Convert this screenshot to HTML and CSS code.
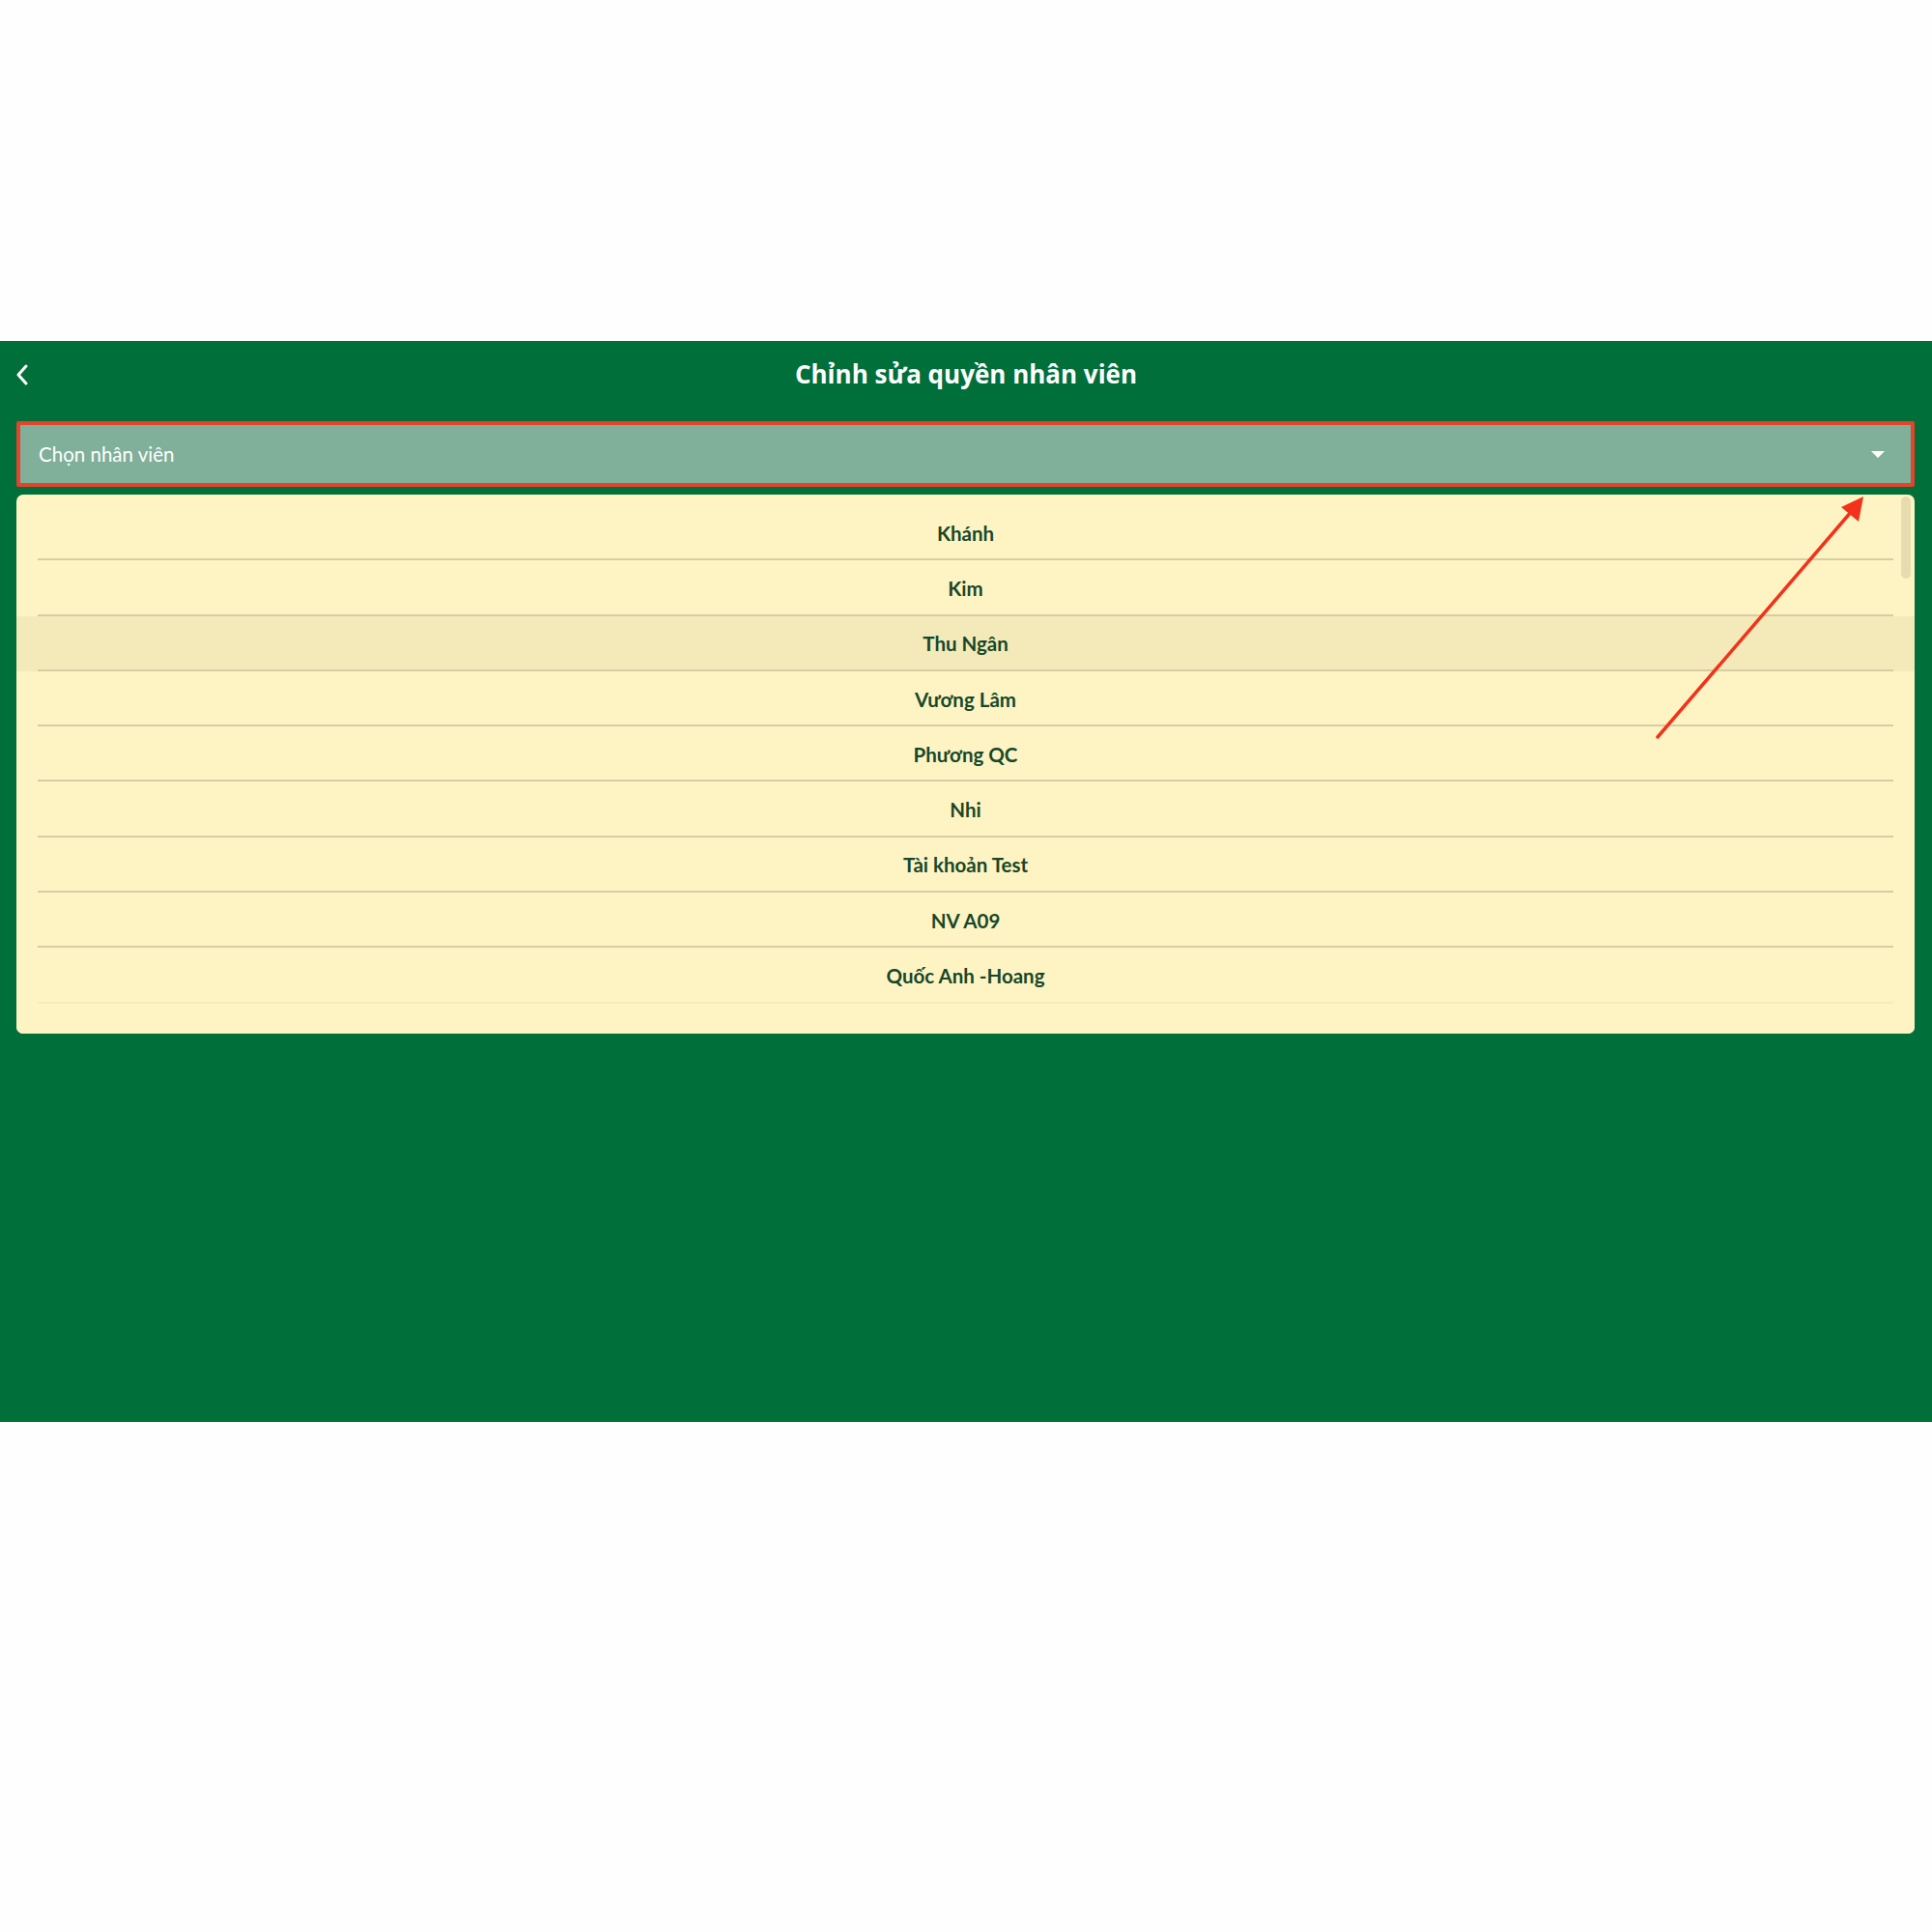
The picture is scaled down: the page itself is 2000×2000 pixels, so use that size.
FILE: index.html
```html
<!DOCTYPE html>
<html lang="vi">
<head>
    <meta charset="UTF-8">
    <meta name="viewport" content="width=device-width, initial-scale=1.0">
    <title>Chỉnh sửa quyền nhân viên</title>
    <link rel="stylesheet" href="styles.css">
</head>
<body>
    <div class="screen">
        <div class="top-bar">
            <span class="back-button">
                <svg width="14" height="22" viewBox="0 0 14 22"><path d="M11 2 L3 11 L11 20" fill="none" stroke="#fff" stroke-width="3" stroke-linecap="round" stroke-linejoin="round"/></svg>
            </span>
            <h1>Chỉnh sửa quyền nhân viên</h1>
        </div>

        <div class="content">
            <div class="select-box">
                <span>Chọn nhân viên</span>
                <span class="caret"></span>
            </div>

            <div class="dropdown">
                <ul class="options">
                    <li>Khánh</li>
                    <li>Kim</li>
                    <li class="active">Thu Ngân</li>
                    <li>Vương Lâm</li>
                    <li>Phương QC</li>
                    <li>Nhi</li>
                    <li>Tài khoản Test</li>
                    <li>NV A09</li>
                    <li>Quốc Anh -Hoang</li>
                    <li>Hoàng</li>
                </ul>
                <div class="fade"></div>
                <div class="scroll-thumb"></div>
            </div>

            <svg class="annotation" width="240" height="270" viewBox="0 0 240 270">
                <line x1="4" y1="253" x2="205" y2="19" stroke="#f2321b" stroke-width="3.5" stroke-linecap="round"/>
                <polygon points="217,4 212,30 194,15" fill="#f2321b"/>
            </svg>
        </div>
    </div>
</body>
</html>
```

FILE: styles.css
```css
body {
    margin: 0;
    padding: 0;
    background-color: #fefefe;
    font-family: "Lato", "Open Sans", sans-serif;
}

.screen {
    margin-top: 353px;
    height: 1119px;
    background-color: #006f3a;
    display: flex;
    flex-direction: column;
}

.top-bar {
    height: 68px;
    display: flex;
    align-items: center;
    justify-content: center;
    position: relative;
}

.top-bar h1 {
    margin: 0;
    color: #fff;
    font-family: "Open Sans", "Lato", sans-serif;
    font-size: 26px;
    font-weight: 700;
}

.back-button {
    position: absolute;
    left: 16px;
    top: 24px;
    display: flex;
}

.content {
    padding: 15px 18px 0 17px;
    position: relative;
}

.select-box {
    height: 60px;
    background-color: #80b09a;
    border: 4px solid #e4432c;
    border-radius: 2px;
    display: flex;
    align-items: center;
    justify-content: space-between;
    padding: 0 27px 0 19px;
    color: #fff;
    font-size: 20.5px;
}

.caret {
    width: 0;
    height: 0;
    border-left: 7px solid transparent;
    border-right: 7px solid transparent;
    border-top: 7px solid #fff;
}

.dropdown {
    margin-top: 8px;
    height: 558px;
    background-color: #fef4c3;
    border-radius: 7px;
    overflow: hidden;
    position: relative;
}

.options {
    list-style: none;
    margin: 0;
    padding: 11px 0 0 0;
}

.options li {
    height: 57.3px;
    box-sizing: border-box;
    display: flex;
    align-items: center;
    justify-content: center;
    color: #17472a;
    font-size: 20.5px;
    font-weight: 700;
    position: relative;
}

.options li::after {
    content: "";
    position: absolute;
    left: 22px;
    right: 22px;
    bottom: 0;
    border-bottom: 2px solid #d8cca2;
}

.options li.active {
    background-color: #f3e9b9;
}

.fade {
    position: absolute;
    left: 0;
    right: 0;
    bottom: 0;
    height: 34px;
    background: linear-gradient(rgba(254, 244, 195, 0.7), #fef4c3 40%);
}

.scroll-thumb {
    position: absolute;
    top: 2px;
    right: 4px;
    width: 10px;
    height: 85px;
    border-radius: 5px;
    background-color: #e7dcaf;
}

.annotation {
    position: absolute;
    left: 1712px;
    top: 89px;
}
```
